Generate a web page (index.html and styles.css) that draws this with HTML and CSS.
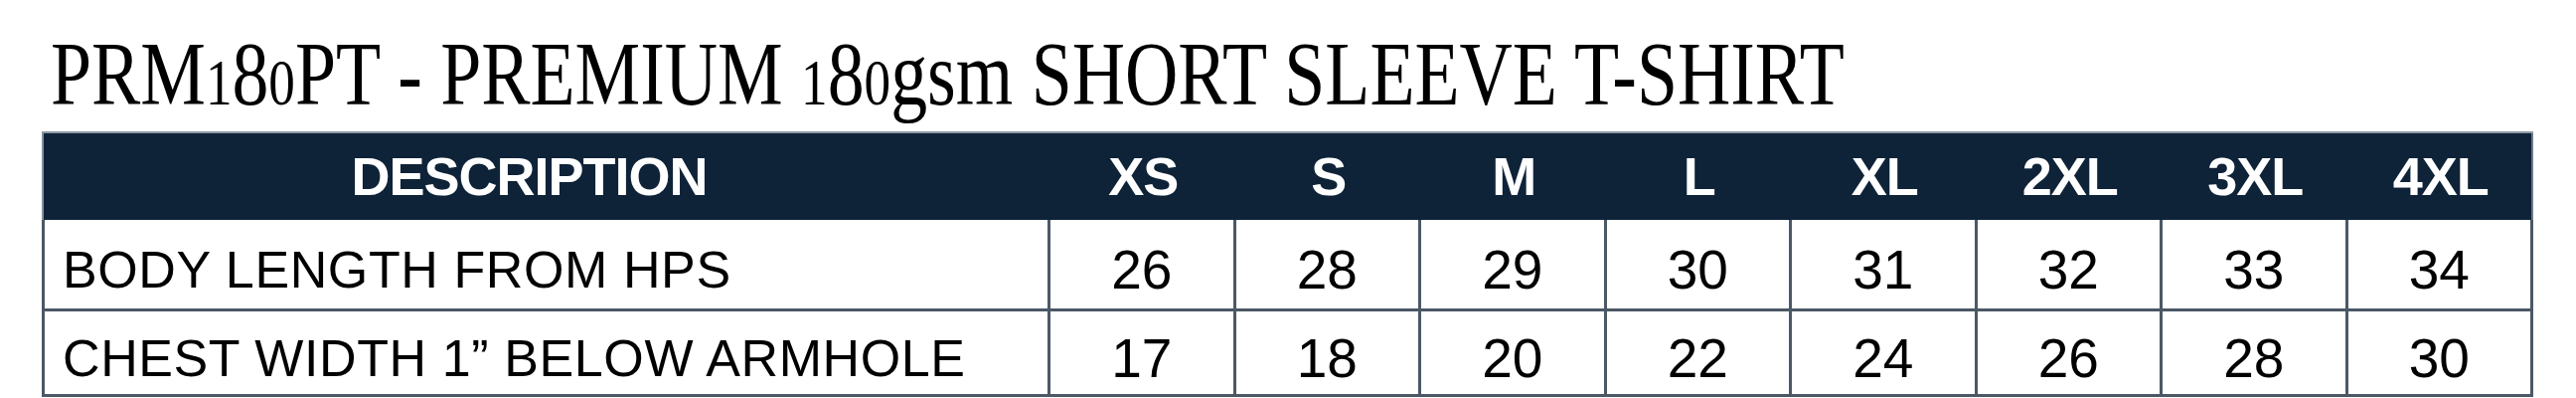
FILE: index.html
```html
<!DOCTYPE html>
<html lang="en">
<head>
<meta charset="utf-8">
<title>PRM180PT Size Chart</title>
<link rel="stylesheet" href="styles.css">
</head>
<body>
<h1 class="title"><span class="title-text">PRM<span class="os">1</span>8<span class="os">0</span>PT - PREMIUM <span class="os">1</span>8<span class="os">0</span>gsm SHORT SLEEVE T-SHIRT</span></h1>
<div class="size-table" role="table">
  <div class="row row-head" role="row">
    <div class="cell cell-desc" role="columnheader">DESCRIPTION</div>
    <div class="cell" role="columnheader">XS</div>
    <div class="cell" role="columnheader">S</div>
    <div class="cell" role="columnheader">M</div>
    <div class="cell" role="columnheader">L</div>
    <div class="cell" role="columnheader">XL</div>
    <div class="cell" role="columnheader">2XL</div>
    <div class="cell" role="columnheader">3XL</div>
    <div class="cell" role="columnheader">4XL</div>
  </div>
  <div class="row row-body row-first" role="row">
    <div class="cell cell-desc" role="cell">BODY LENGTH FROM HPS</div>
    <div class="cell" role="cell">26</div>
    <div class="cell" role="cell">28</div>
    <div class="cell" role="cell">29</div>
    <div class="cell" role="cell">30</div>
    <div class="cell" role="cell">31</div>
    <div class="cell" role="cell">32</div>
    <div class="cell" role="cell">33</div>
    <div class="cell" role="cell">34</div>
  </div>
  <div class="row row-body row-second" role="row">
    <div class="cell cell-desc" role="cell">CHEST WIDTH 1” BELOW ARMHOLE</div>
    <div class="cell" role="cell">17</div>
    <div class="cell" role="cell">18</div>
    <div class="cell" role="cell">20</div>
    <div class="cell" role="cell">22</div>
    <div class="cell" role="cell">24</div>
    <div class="cell" role="cell">26</div>
    <div class="cell" role="cell">28</div>
    <div class="cell" role="cell">30</div>
  </div>
</div>
</body>
</html>
```
FILE: styles.css
```css
html, body {
  margin: 0;
  padding: 0;
  background: #ffffff;
}

body {
  width: 2592px;
  height: 400px;
  overflow: hidden;
  font-family: "Liberation Sans", Arial, sans-serif;
  color: #000;
}

.title {
  margin: 0 0 12px 0;
  padding: 30px 0 0 51px;
  height: 90px;
  font-family: "Liberation Serif", "Times New Roman", serif;
  font-weight: normal;
  font-size: 90px;
  line-height: 90px;
  white-space: nowrap;
}

.title-text {
  display: inline-block;
  transform: scaleX(0.82);
  transform-origin: left center;
}

.os {
  font-size: 0.72em;
}

.size-table {
  margin-left: 42px;
  width: 2507px;
}

.row {
  display: grid;
  grid-template-columns: 1015px repeat(8, 1fr);
}

.cell {
  display: flex;
  align-items: center;
  justify-content: center;
  box-sizing: border-box;
  white-space: nowrap;
  line-height: 1;
}

.row-head {
  height: 89px;
  background: #0f2338;
  box-shadow: inset 0 2px 0 #8d9aa6, inset 2px 0 0 #8491a0, inset -2px 0 0 #6c7b89;
}

.row-head .cell {
  color: #ffffff;
  font-weight: bold;
  font-size: 54px;
  letter-spacing: -1px;
}

.row-head .cell-desc {
  padding-right: 34px;
}

.row-body .cell {
  border-right: 3px solid #4b5866;
  border-bottom: 3px solid #4b5866;
  font-size: 55px;
  padding-top: 11px;
}

.row-body .cell-desc {
  border-left: 3px solid #4b5866;
  justify-content: flex-start;
  padding-left: 18px;
  font-size: 52px;
  letter-spacing: 0.6px;
}

.row-first {
  height: 92px;
}

.row-second {
  height: 86px;
}
```
